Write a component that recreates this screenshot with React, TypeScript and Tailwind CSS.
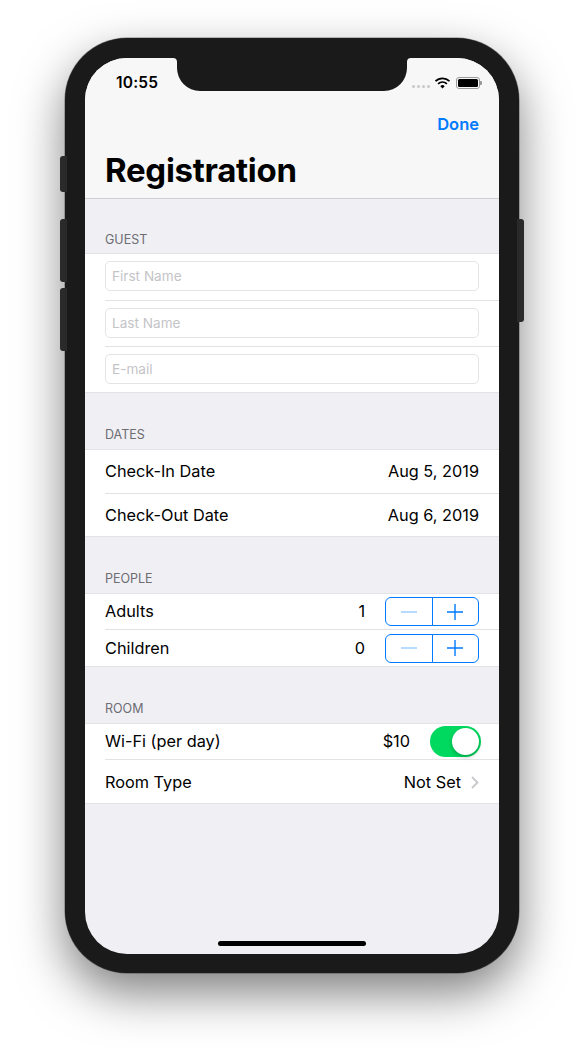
import React from "react";

const font = { fontFamily: 'Inter, "Liberation Sans", sans-serif' };

function SectionHeader({ title, h }: { title: string; h: string }) {
  return (
    <div className={`${h} flex items-end px-5 text-[12.5px] leading-[15px] text-[#6d6d72]`}>
      {title}
    </div>
  );
}

function InputRow({ placeholder, h, last }: { placeholder: string; h: string; last?: boolean }) {
  return (
    <div className={`${h} ml-5 pr-5 pt-[7px] ${last ? "" : "border-b border-[#e3e3e6]"}`}>
      <div className="h-[30px] rounded-[5px] border border-[#e4e4e6] px-[6px] flex items-center text-[13.6px] text-[#c4c4c7]">
        {placeholder}
      </div>
    </div>
  );
}

function Stepper() {
  return (
    <div className="w-[94px] h-[29px] rounded-[6px] border-[1.3px] border-[#007aff] flex">
      <div className="w-[47px] border-r-[1.3px] border-[#007aff] flex items-center justify-center">
        <svg width="16" height="16" viewBox="0 0 16 16"><path d="M0 8h16" stroke="#99caff" strokeWidth="1.4" /></svg>
      </div>
      <div className="flex-1 pr-[1px] flex items-center justify-center">
        <svg width="16" height="16" viewBox="0 0 16 16"><path d="M0 8h16M8 0v16" stroke="#007aff" strokeWidth="1.4" /></svg>
      </div>
    </div>
  );
}

function StepRow({ label, value, last }: { label: string; value: string; last?: boolean }) {
  return (
    <div className={`h-[36px] ${last ? "" : "border-b border-[#e3e3e6]"} ml-5 pr-5 flex items-center text-[16.3px] text-black`}>
      <span className="flex-1">{label}</span>
      <span className="mr-[20px]">{value}</span>
      <Stepper />
    </div>
  );
}

function ValueRow({ label, value, last }: { label: string; value: string; last?: boolean }) {
  return (
    <div className={`${last ? "h-[42px]" : "h-[44px] border-b border-[#e3e3e6]"} ml-5 pr-5 flex items-center justify-between text-[16.3px] text-black`}>
      <span>{label}</span>
      <span>{value}</span>
    </div>
  );
}

function Group({ children }: { children: React.ReactNode }) {
  return <div className="bg-white border-t border-b border-[#e3e3e6]">{children}</div>;
}

export default function App() {
  return (
    <div className="w-[584px] h-[1048px] bg-white overflow-hidden pl-[65px] pt-[38px]" style={font}>
      <div className="relative w-[454px] h-[935px] rounded-[62px] bg-[#1a1a1a] px-[20px] py-[20px] shadow-[0_0_0_0.5px_rgba(0,0,0,0.45),0_20px_48px_rgba(0,0,0,0.5)]">
        {/* side buttons */}
        <div className="absolute left-[-5px] top-[118px] w-[7px] h-[36px] rounded-l-[3px] bg-[#2a2a2a]" />
        <div className="absolute left-[-5px] top-[181px] w-[7px] h-[63px] rounded-l-[3px] bg-[#2a2a2a]" />
        <div className="absolute left-[-5px] top-[250px] w-[7px] h-[63px] rounded-l-[3px] bg-[#2a2a2a]" />
        <div className="absolute right-[-5px] top-[181px] w-[7px] h-[103px] rounded-r-[3px] bg-[#2a2a2a]" />

        <div className="relative w-[414px] h-[896px] rounded-[42px] overflow-hidden bg-[#efeff4]">
          {/* notch */}
          <svg className="absolute left-[88px] top-0" width="238" height="33" viewBox="0 0 238 33">
            <path d="M0 0Q4 0 4 4V10A23 23 0 0 0 27 33H211A23 23 0 0 0 234 10V4Q234 0 238 0Z" fill="#1a1a1a" />
          </svg>

          {/* nav */}
          <div className="h-[141px] bg-[#f7f7f8] border-b border-[#cfcfd2] flex flex-col">
            <div className="h-[44px] flex items-center justify-between pl-[31px] pr-[17px] pt-[6px]">
              <span className="text-[15.5px] font-semibold text-black tracking-[0.2px]">10:55</span>
              <div className="flex items-center">
                <div className="flex gap-[2px] mt-[6px]">
                  <span className="w-[3px] h-[3px] rounded-full bg-[#c9c9c9]" />
                  <span className="w-[3px] h-[3px] rounded-full bg-[#c9c9c9]" />
                  <span className="w-[3px] h-[3px] rounded-full bg-[#c9c9c9]" />
                  <span className="w-[3px] h-[3px] rounded-full bg-[#c9c9c9]" />
                </div>
                <svg width="17" height="12" viewBox="0 0 16 12" className="ml-[4px]">
                  <path d="M1 4.2a10 10 0 0 1 14 0" fill="none" stroke="#000" strokeWidth="1.7" />
                  <path d="M3.6 6.8a6.3 6.3 0 0 1 8.8 0" fill="none" stroke="#000" strokeWidth="1.7" />
                  <path d="M8 11.5 5.8 9.2a3.1 3.1 0 0 1 4.4 0z" fill="#000" />
                </svg>
                <div className="flex items-center ml-[5px]">
                  <div className="w-[24px] h-[12px] rounded-[3px] border border-[#9a9a9a] p-[1px]">
                    <div className="w-full h-full rounded-[1.5px] bg-black" />
                  </div>
                  <div className="w-[2px] h-[4px] rounded-r-[1px] bg-[#9a9a9a]" />
                </div>
              </div>
            </div>
            <div className="h-[44px] flex items-center justify-end pr-[20px]">
              <span className="text-[16.5px] font-semibold text-[#007aff]">Done</span>
            </div>
            <div className="pl-[20px] pt-[4px] text-[33px] leading-[40px] font-bold text-black tracking-[-0.3px]">Registration</div>
          </div>

          <SectionHeader title="GUEST" h="h-[54px] pb-[6px]" />
          <Group>
            <InputRow placeholder="First Name" h="h-[47px]" />
            <InputRow placeholder="Last Name" h="h-[46px]" />
            <InputRow placeholder="E-mail" h="h-[45px]" last />
          </Group>

          <SectionHeader title="DATES" h="h-[56px] pb-[7px]" />
          <Group>
            <ValueRow label="Check-In Date" value="Aug 5, 2019" />
            <ValueRow label="Check-Out Date" value="Aug 6, 2019" last />
          </Group>

          <SectionHeader title="PEOPLE" h="h-[56px] pb-[7px]" />
          <Group>
            <StepRow label="Adults" value="1" />
            <StepRow label="Children" value="0" last />
          </Group>

          <SectionHeader title="ROOM" h="h-[56px] pb-[7px]" />
          <Group>
            <div className="h-[36px] ml-5 pr-[18px] flex items-center text-[16.3px] text-black border-b border-[#e3e3e6]">
              <span className="flex-1">Wi-Fi (per day)</span>
              <span className="mr-[20px]">$10</span>
              <div className="w-[51px] h-[31px] rounded-full bg-[#00d95f] flex items-center justify-end pr-[2px]">
                <div className="w-[27px] h-[27px] rounded-full bg-white shadow-[0_2px_4px_rgba(0,0,0,0.25)]" />
              </div>
            </div>
            <div className="h-[43px] pt-[1px] ml-5 pr-5 flex items-center text-[16.3px] text-black">
              <span className="flex-1">Room Type</span>
              <span className="mr-[10px]">Not Set</span>
              <svg width="8" height="13" viewBox="0 0 8 13">
                <path d="M1 1l5.5 5.5L1 12" fill="none" stroke="#c7c7cc" strokeWidth="1.8" />
              </svg>
            </div>
          </Group>

          {/* home indicator */}
          <div className="absolute left-[133px] bottom-[8px] w-[148px] h-[5px] rounded-full bg-black" />
        </div>
      </div>
    </div>
  );
}
